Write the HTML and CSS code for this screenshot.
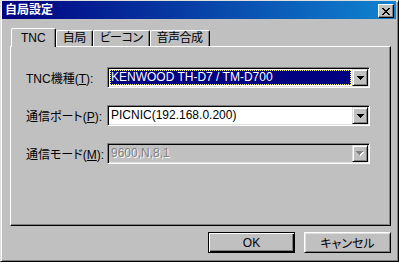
FILE: index.html
```html
<!DOCTYPE html>
<html lang="ja">
<head>
    <meta charset="UTF-8">
    <meta name="viewport" content="width=device-width, initial-scale=1.0">
    <title>自局設定</title>
    <link rel="stylesheet" href="styles.css">
</head>
<body>
    <div class="window">
        <div class="titlebar">
            <span class="title">自局設定</span>
            <span class="close">
                <svg width="8" height="7" viewBox="0 0 8 7"><path d="M0 0h2v1h-2zM6 0h2v1h-2zM1 1h2v1h-2zM5 1h2v1h-2zM2 2h4v1h-4zM3 3h2v1h-2zM2 4h4v1h-4zM1 5h2v1h-2zM5 5h2v1h-2zM0 6h2v1h-2zM6 6h2v1h-2z" fill="#000"/></svg>
            </span>
        </div>

        <div class="body">
            <div class="tabs">
                <div class="tab active">TNC</div>
                <div class="tab">自局</div>
                <div class="tab">ビーコン</div>
                <div class="tab">音声合成</div>
            </div>

            <div class="panel">
                <div class="field">
                    <label>TNC機種(<u>T</u>):</label>
                    <div class="combo">
                        <div class="value"><span class="selected">KENWOOD TH-D7 / TM-D700</span></div>
                        <div class="arrow">
                            <svg width="7" height="4" viewBox="0 0 7 4"><path d="M0 0h7v1h-7zM1 1h5v1h-5zM2 2h3v1h-3zM3 3h1v1h-1z" fill="#000"/></svg>
                        </div>
                    </div>
                </div>
                <div class="field">
                    <label>通信ポート(<u>P</u>):</label>
                    <div class="combo">
                        <div class="value"><span>PICNIC(192.168.0.200)</span></div>
                        <div class="arrow">
                            <svg width="7" height="4" viewBox="0 0 7 4"><path d="M0 0h7v1h-7zM1 1h5v1h-5zM2 2h3v1h-3zM3 3h1v1h-1z" fill="#000"/></svg>
                        </div>
                    </div>
                </div>
                <div class="field">
                    <label>通信モード(<u>M</u>):</label>
                    <div class="combo disabled">
                        <div class="value"><span>9600,N,8,1</span></div>
                        <div class="arrow">
                            <svg width="8" height="5" viewBox="0 0 8 5"><path d="M1 1h7v1h-7zM2 2h5v1h-5zM3 3h3v1h-3zM4 4h1v1h-1z" fill="#fff"/><path d="M0 0h7v1h-7zM1 1h5v1h-5zM2 2h3v1h-3zM3 3h1v1h-1z" fill="#808080"/></svg>
                        </div>
                    </div>
                </div>
            </div>

            <div class="actions">
                <div class="btn default">OK</div>
                <div class="btn">キャンセル</div>
            </div>
        </div>
    </div>
</body>
</html>
```

FILE: styles.css
```css
body{
    margin: 0;
    font-family: 'Liberation Sans', 'Noto Sans CJK JP', sans-serif;
    font-size: 12px;
    font-feature-settings: "palt";
    color: #000;
    -webkit-user-select: none;
    user-select: none;
}
.window{
    width: 399px;
    height: 262px;
    box-sizing: border-box;
    background: #c0c0c0;
    border: 1px solid;
    border-color: #dfdfdf #000 #000 #dfdfdf;
    box-shadow: inset 1px 1px #fff, inset -1px -1px #808080;
    padding: 0 2px 0 1px;
}
.titlebar{
    height: 18px;
    display: flex;
    align-items: center;
    justify-content: space-between;
    padding: 0 2px 0 3px;
    background: linear-gradient(to right, #000080, #1084d0);
}
.title{
    color: #fff;
    font-weight: bold;
    line-height: 14px;
}
.close{
    width: 16px;
    height: 14px;
    box-sizing: border-box;
    display: flex;
    align-items: center;
    justify-content: center;
    margin-top: 2px;
    background: #c0c0c0;
    border: 1px solid;
    border-color: #fff #000 #000 #fff;
    box-shadow: inset -1px -1px #808080;
}
.body{
    padding: 9px 5px 0 8px;
}
.tabs{
    display: flex;
    align-items: flex-end;
    height: 18px;
    padding-left: 1px;
}
.tab{
    height: 16px;
    box-sizing: border-box;
    padding: 0 6px;
    line-height: 14px;
    letter-spacing: -0.5px;
    border: 1px solid;
    border-bottom: none;
    border-color: #fff #000 #000 #fff;
    border-radius: 2px 2px 0 0;
    box-shadow: inset -1px 0 #808080;
}
.tab.active{
    position: relative;
    z-index: 1;
    height: 19px;
    margin-bottom: -1px;
    padding: 2px 9px 0;
    letter-spacing: 0;
    background: #c0c0c0;
}
.panel{
    height: 180px;
    box-sizing: border-box;
    border: 1px solid;
    border-color: #fff #000 #000 #fff;
    box-shadow: inset -1px -1px #808080;
    padding: 20px 0 0 15px;
    display: flex;
    flex-direction: column;
    gap: 17px;
}
.field{
    display: flex;
    align-items: center;
    height: 21px;
}
.field label{
    width: 81px;
}
.combo{
    width: 263px;
    height: 21px;
    box-sizing: border-box;
    display: flex;
    background: #fff;
    border: 1px solid;
    border-color: #808080 #fff #fff #808080;
    box-shadow: inset 1px 1px #000, inset -1px -1px #dfdfdf;
    padding: 1px;
}
.value{
    flex: 1;
    display: flex;
    padding: 1px;
}
.value span{
    flex: 1;
    padding-left: 1px;
    line-height: 15px;
    white-space: nowrap;
}
.value .selected{
    background: #000080;
    color: #fff;
    outline: 1px dotted #ffff80;
    outline-offset: -1px;
}
.arrow{
    width: 16px;
    box-sizing: border-box;
    display: flex;
    align-items: center;
    justify-content: center;
    background: #c0c0c0;
    border: 1px solid;
    border-color: #dfdfdf #000 #000 #dfdfdf;
    box-shadow: inset 1px 1px #fff, inset -1px -1px #808080;
}
.combo.disabled{
    background: #c0c0c0;
}
.combo.disabled .value span{
    color: #808080;
    text-shadow: 1px 1px #fff;
}
.actions{
    display: flex;
    justify-content: flex-end;
    gap: 9px;
    margin-top: 6px;
}
.btn{
    width: 87px;
    height: 21px;
    box-sizing: border-box;
    display: flex;
    align-items: center;
    justify-content: center;
    border: 1px solid;
    border-color: #fff #000 #000 #fff;
    box-shadow: inset 1px 1px #dfdfdf, inset -1px -1px #808080;
}
.btn.default{
    border-color: #000;
    box-shadow: inset 1px 1px #fff, inset -1px -1px #000, inset -2px -2px #808080;
}
```
